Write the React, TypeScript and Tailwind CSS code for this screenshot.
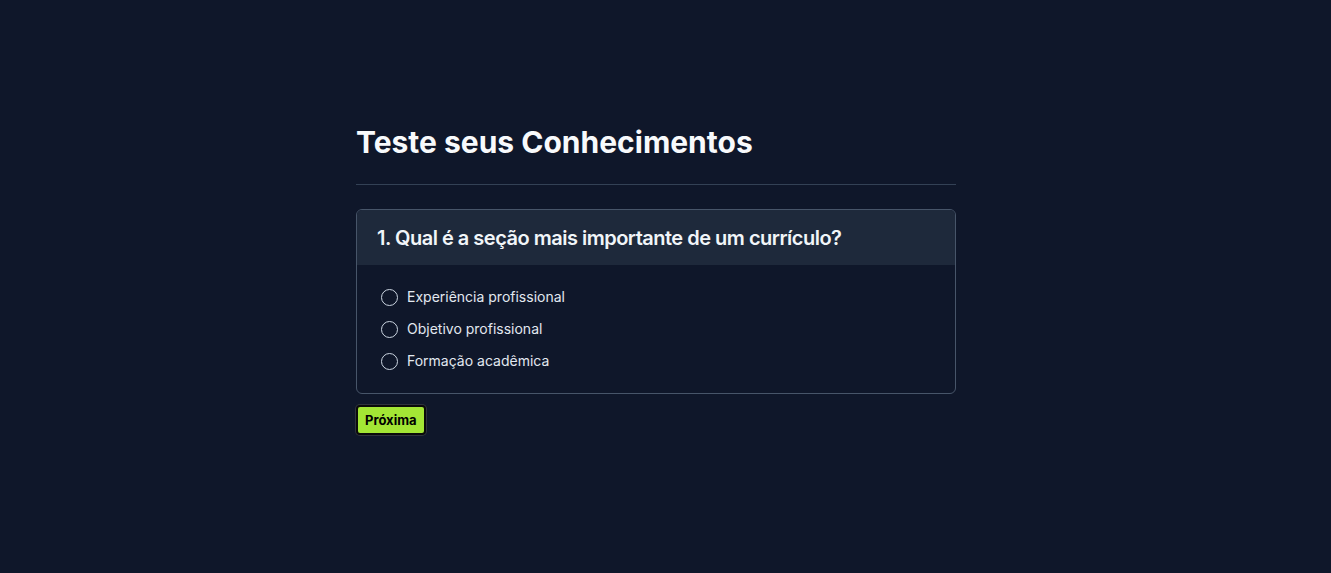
import React from "react";

const options = ["Experiência profissional", "Objetivo profissional", "Formação acadêmica"];

export default function App() {
  return (
    <div className="min-h-[573px] w-full bg-[#0f172a] font-['Inter',sans-serif]">
      <div className="pl-[356px] pt-[124px]">
        <div className="w-[600px]">
          <h1 className="text-[30px] leading-[36px] font-bold text-[#f8fafc]">Teste seus Conhecimentos</h1>
          <div className="mt-[24px] border-t border-[#334155]" />
          <div className="mt-6 rounded-md border border-[#475569] overflow-hidden">
            <div className="flex h-[55px] items-center bg-[#1e293b] px-5">
              <h2 className="text-[20px] leading-[28px] font-semibold tracking-tight text-[#f1f5f9]">
                1. Qual é a seção mais importante de um currículo?
              </h2>
            </div>
            <div className="flex flex-col gap-2 px-6 py-5">
              {options.map((o) => (
                <label key={o} className="flex h-6 items-center gap-[9px]">
                  <span className="h-[17px] w-[17px] rounded-full border border-[#cbd5e1]" />
                  <span className="text-[14px] leading-5 text-[#e2e8f0]">{o}</span>
                </label>
              ))}
            </div>
          </div>
          <button className="mt-[11px] rounded-[4px] border-2 border-[#0a0a0a] bg-[#a3e635] px-[7px] py-[4px] text-[13px] leading-[18px] font-bold text-black shadow-[0_0_0_1px_rgba(80,80,80,0.5)]">
            Próxima
          </button>
        </div>
      </div>
    </div>
  );
}
